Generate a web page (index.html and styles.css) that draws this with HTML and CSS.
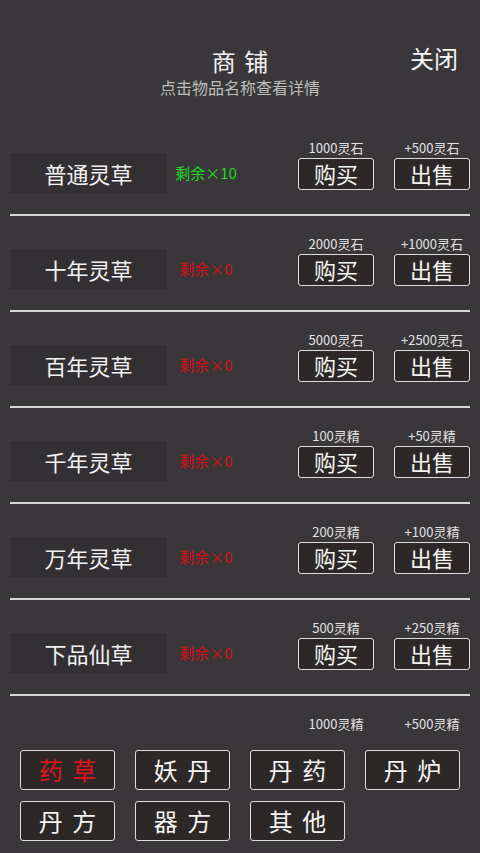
FILE: index.html
```html
<!DOCTYPE html>
<html lang="zh">
<head>
<meta charset="utf-8">
<title>商铺</title>
<link rel="stylesheet" href="styles.css">
</head>
<body>
<div class="page">
  <header class="header">
    <div class="spacer"></div>
    <div class="title-block">
      <div class="title">商 铺</div>
      <div class="subtitle">点击物品名称查看详情</div>
    </div>
    <div class="close">关闭</div>
  </header>

  <div class="list">
    <div class="row">
      <div class="name">普通灵草</div>
      <div class="stock green">剩余×10</div>
      <div class="trade">
        <div class="deal"><div class="price">1000灵石</div><div class="btn">购买</div></div>
        <div class="deal"><div class="price">+500灵石</div><div class="btn">出售</div></div>
      </div>
    </div>
    <div class="row">
      <div class="name">十年灵草</div>
      <div class="stock red">剩余×0</div>
      <div class="trade">
        <div class="deal"><div class="price">2000灵石</div><div class="btn">购买</div></div>
        <div class="deal"><div class="price">+1000灵石</div><div class="btn">出售</div></div>
      </div>
    </div>
    <div class="row">
      <div class="name">百年灵草</div>
      <div class="stock red">剩余×0</div>
      <div class="trade">
        <div class="deal"><div class="price">5000灵石</div><div class="btn">购买</div></div>
        <div class="deal"><div class="price">+2500灵石</div><div class="btn">出售</div></div>
      </div>
    </div>
    <div class="row">
      <div class="name">千年灵草</div>
      <div class="stock red">剩余×0</div>
      <div class="trade">
        <div class="deal"><div class="price">100灵精</div><div class="btn">购买</div></div>
        <div class="deal"><div class="price">+50灵精</div><div class="btn">出售</div></div>
      </div>
    </div>
    <div class="row">
      <div class="name">万年灵草</div>
      <div class="stock red">剩余×0</div>
      <div class="trade">
        <div class="deal"><div class="price">200灵精</div><div class="btn">购买</div></div>
        <div class="deal"><div class="price">+100灵精</div><div class="btn">出售</div></div>
      </div>
    </div>
    <div class="row">
      <div class="name">下品仙草</div>
      <div class="stock red">剩余×0</div>
      <div class="trade">
        <div class="deal"><div class="price">500灵精</div><div class="btn">购买</div></div>
        <div class="deal"><div class="price">+250灵精</div><div class="btn">出售</div></div>
      </div>
    </div>
    <div class="row partial">
      <div class="trade">
        <div class="deal"><div class="price">1000灵精</div></div>
        <div class="deal"><div class="price">+500灵精</div></div>
      </div>
    </div>
  </div>

  <nav class="tabs">
    <div class="tab active">药 草</div>
    <div class="tab">妖 丹</div>
    <div class="tab">丹 药</div>
    <div class="tab">丹 炉</div>
    <div class="tab">丹 方</div>
    <div class="tab">器 方</div>
    <div class="tab">其 他</div>
  </nav>
</div>
</body>
</html>
```

FILE: styles.css
```css
html, body {
  margin: 0;
  padding: 0;
  background: #3a373a;
}

body {
  font-family: "Noto Sans CJK SC", "Noto Sans", sans-serif;
  color: #f2f2f2;
}

.page {
  width: 480px;
  height: 853px;
  overflow: hidden;
  display: flex;
  flex-direction: column;
}

.header {
  height: 120px;
  box-sizing: border-box;
  padding-top: 46px;
  display: grid;
  grid-template-columns: 1fr auto 1fr;
  align-items: start;
}

.title-block {
  text-align: center;
}

.title {
  font-size: 24px;
  line-height: 30px;
  color: #f4f4f4;
  word-spacing: 3px;
}

.subtitle {
  font-size: 16px;
  line-height: 20px;
  color: #bdbdbd;
  margin-top: 1px;
}

.close {
  justify-self: end;
  margin-right: 22px;
  margin-top: -3px;
  font-size: 24px;
  line-height: 30px;
  color: #f4f4f4;
}

.list {
  height: 614px;
  overflow: hidden;
  flex: none;
}

.row {
  margin: 0 10px;
  height: 96px;
  box-sizing: border-box;
  border-bottom: 2px solid #d6d6d6;
  display: flex;
  align-items: flex-start;
}

.row.partial {
  height: auto;
  border-bottom: none;
}

.name {
  width: 157px;
  height: 40px;
  margin-top: 33px;
  background: #323032;
  font-size: 22px;
  line-height: 40px;
  text-align: center;
  color: #f2f2f2;
}

.stock {
  width: 78px;
  margin-top: 33px;
  line-height: 40px;
  font-size: 15px;
  text-align: center;
}

.green { color: #22d622; }
.red { color: #d01010; }

.trade {
  margin-left: auto;
  margin-top: 18px;
  display: flex;
  gap: 20px;
}

.deal {
  width: 76px;
  display: flex;
  flex-direction: column;
  align-items: center;
}

.price {
  font-size: 13px;
  line-height: 20px;
  color: #e2e2e2;
  white-space: nowrap;
}

.btn {
  width: 76px;
  height: 32px;
  box-sizing: border-box;
  border: 1.5px solid #dcdcdc;
  border-radius: 3px;
  background: #2c2828;
  font-size: 22px;
  line-height: 29px;
  text-align: center;
  color: #f4f4f4;
}

.tabs {
  flex: none;
  padding: 16px 20px 0;
  display: grid;
  grid-template-columns: repeat(4, 95px);
  grid-auto-rows: 40px;
  column-gap: 20px;
  row-gap: 11px;
}

.tab {
  box-sizing: border-box;
  border: 1.5px solid #dcdcdc;
  border-radius: 3px;
  background: #2c2828;
  font-size: 24px;
  line-height: 37px;
  text-align: center;
  color: #f4f4f4;
  word-spacing: 4px;
}

.tab.active {
  color: #e3141a;
}
```
